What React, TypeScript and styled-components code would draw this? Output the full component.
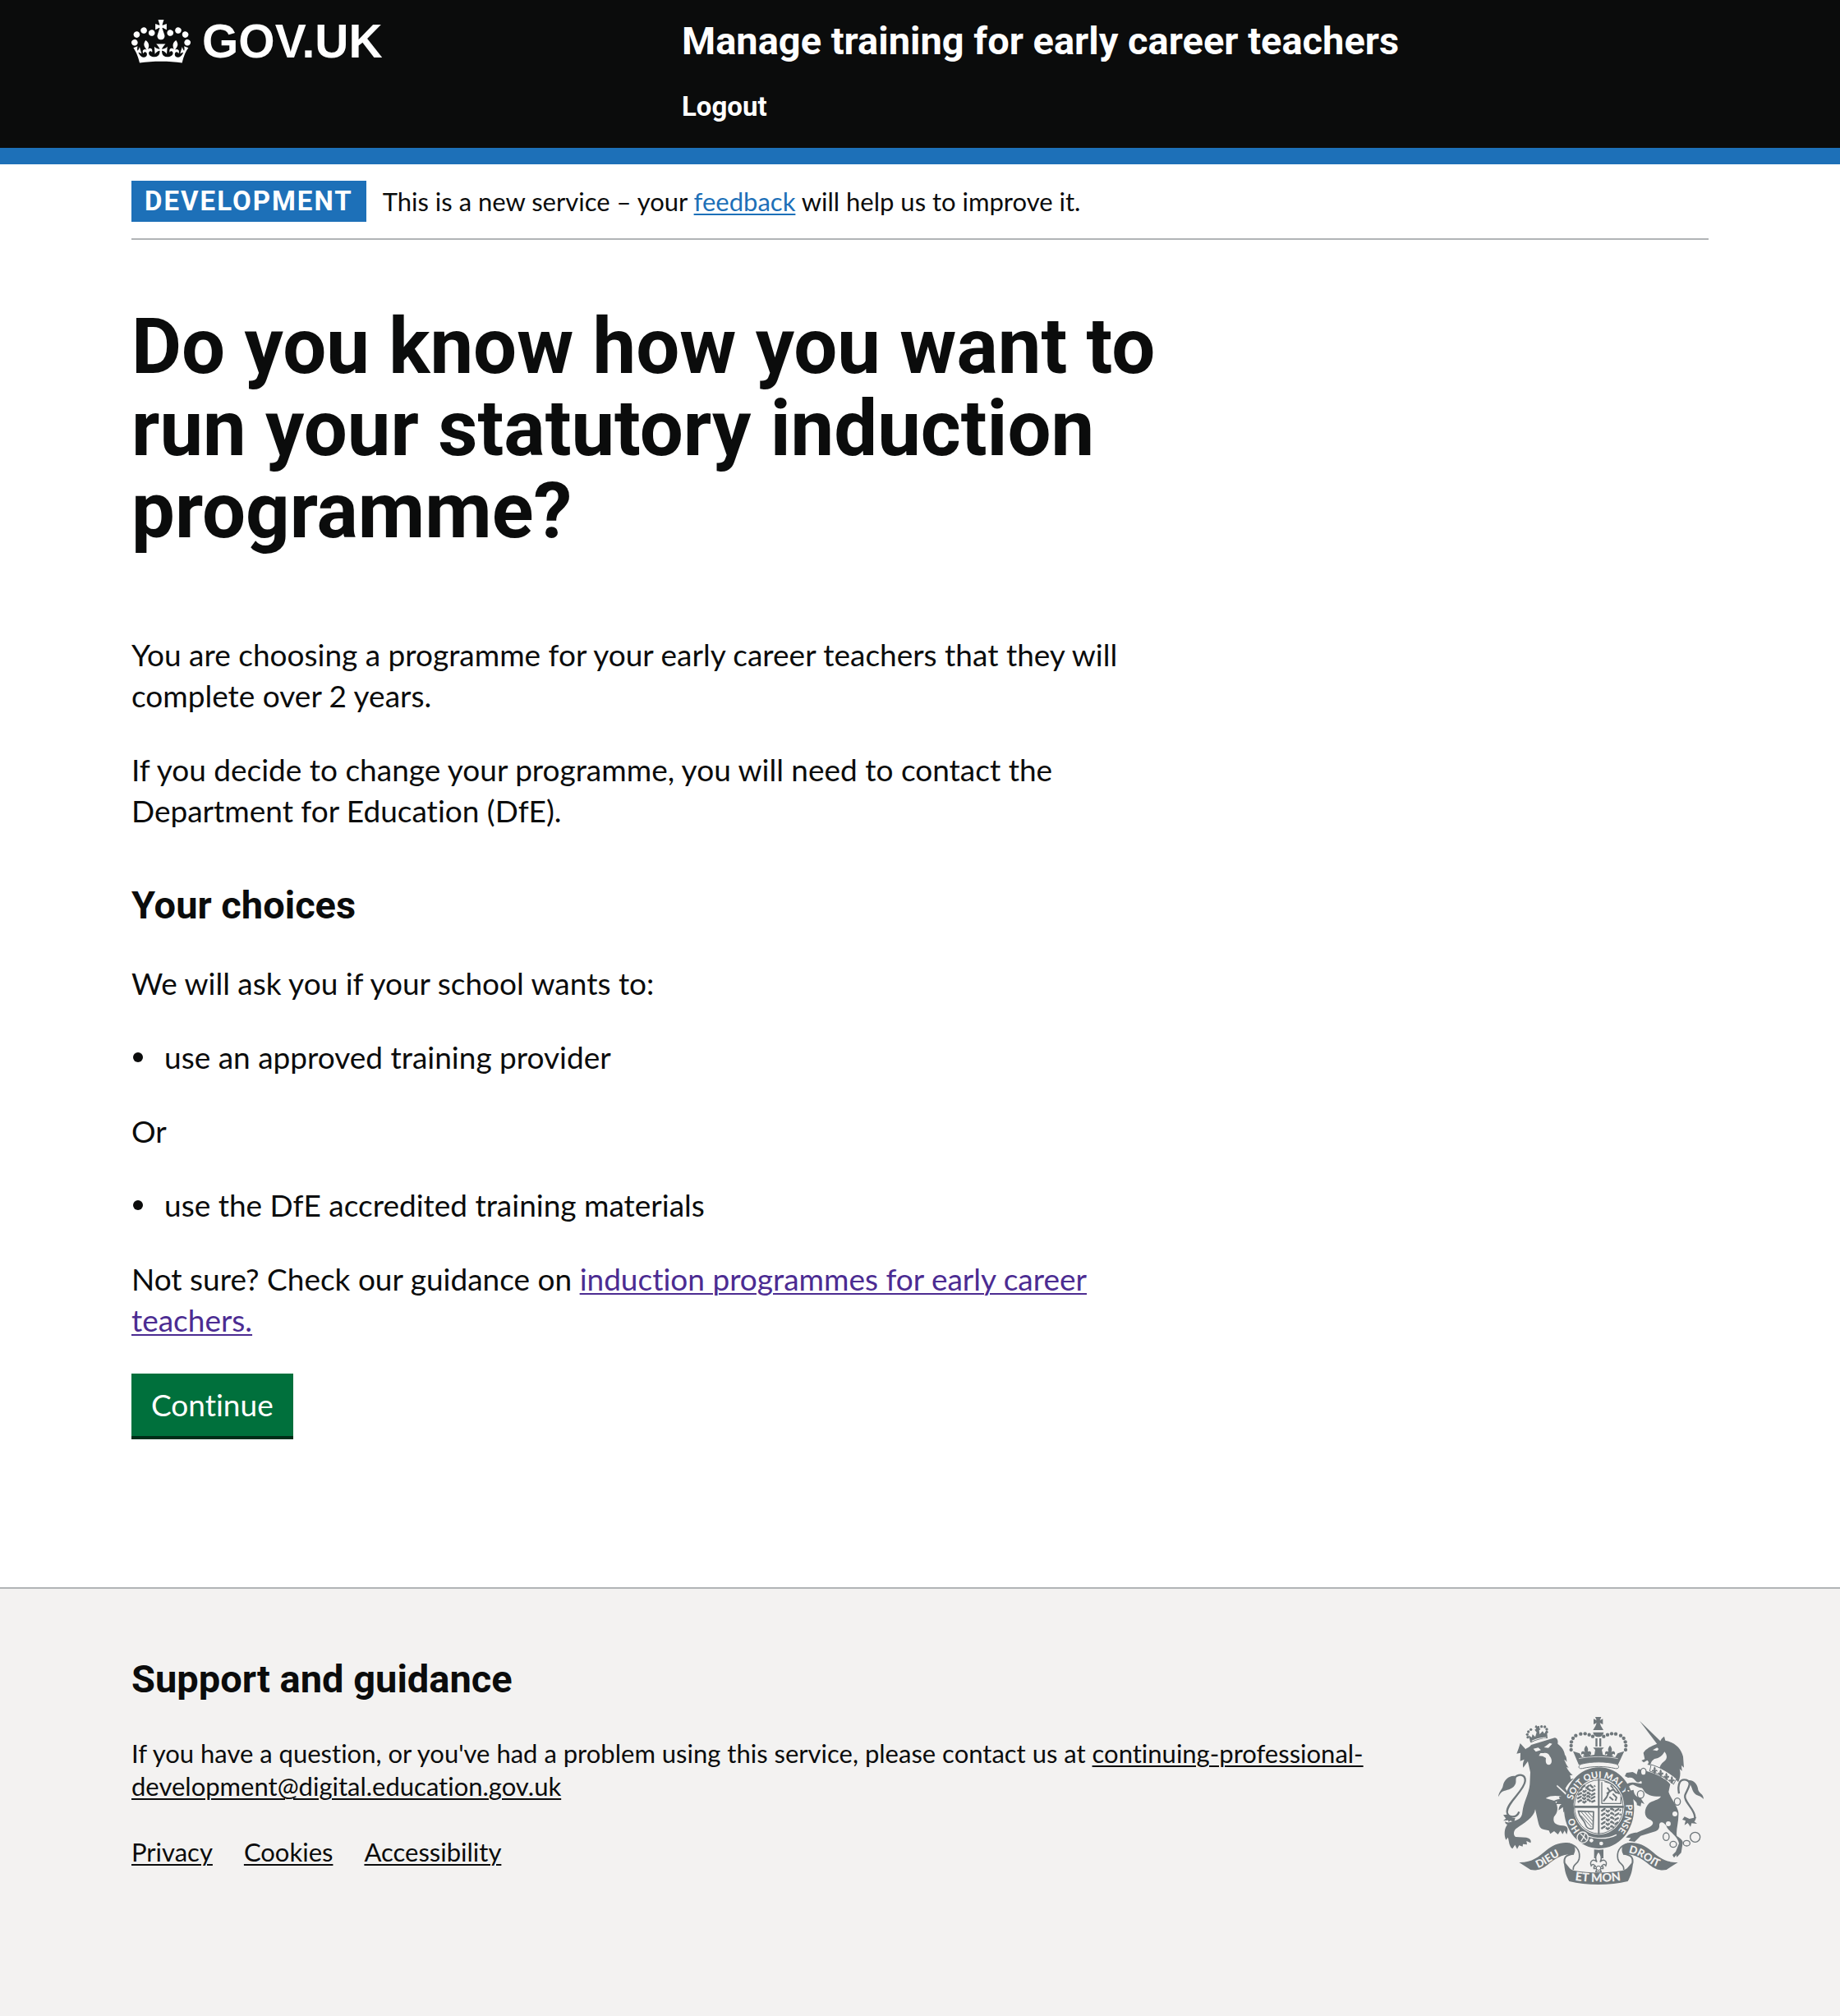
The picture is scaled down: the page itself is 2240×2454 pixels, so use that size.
import React from "react";
import styled, { createGlobalStyle } from "styled-components";

const ink = "#0b0c0c";
const blue = "#1d70b8";
const grey = "#b1b4b6";
const paper = "#f3f2f1";
const slate = "#6f777b";
const sans = `Lato, "Liberation Sans", Arial, sans-serif`;
const display = `Roboto, "Liberation Sans", Arial, sans-serif`;

const GlobalStyle = createGlobalStyle`
  *, *::before, *::after { box-sizing: border-box; }
  html { background: ${paper}; }
  body {
    margin: 0;
    color: ${ink};
    font-family: ${sans};
    font-variant-ligatures: none;
  }
  h1, h2, p, ul { margin: 0; padding: 0; }
`;

const Page = styled.div`
  display: flex;
  flex-direction: column;
  min-height: 100vh;
  background: #ffffff;
`;

const Container = styled.div`
  width: 100%;
  max-width: 2240px;
  margin: 0 auto;
  padding: 0 160px;
`;

const Header = styled.header`
  background: ${ink};
  border-bottom: 20px solid ${blue};
`;

const HeaderGrid = styled.div`
  display: grid;
  grid-template-columns: 1fr 2fr;
  padding: 20px 0 30px;
`;

const LogoLink = styled.a`
  display: flex;
  align-items: center;
  align-self: start;
  gap: 14px;
  height: 60px;
  color: #ffffff;
  font: bold 57px/60px "Liberation Sans", Arial, sans-serif;
  text-decoration: none;
`;

const HeaderContent = styled.div`
  display: flex;
  flex-direction: column;
  gap: 30px;
  padding-left: 30px;
`;

const HeaderLink = styled.a<{ $large?: boolean }>`
  align-self: flex-start;
  color: #ffffff;
  font-family: ${display};
  font-size: ${(p) => (p.$large ? 47 : 33)}px;
  line-height: ${(p) => (p.$large ? 60 : 40)}px;
  font-weight: bold;
  text-decoration: none;
`;

const Banner = styled.div`
  display: flex;
  align-items: center;
  gap: 20px;
  padding: 20px 0;
  border-bottom: 2px solid ${grey};
  font-size: 31px;
  line-height: 40px;
`;

const Tag = styled.strong`
  padding: 5px 16px;
  background: ${blue};
  color: #ffffff;
  font-family: ${display};
  font-size: 33px;
  letter-spacing: 2px;
  text-transform: uppercase;
`;

const Link = styled.a<{ $color?: string }>`
  color: ${(p) => p.$color ?? ink};
  text-decoration: underline;
  text-decoration-thickness: 2px;
  text-underline-offset: 3px;
`;

const Main = styled.main`
  display: flex;
  flex-direction: column;
  align-items: flex-start;
  gap: 40px;
  width: 66%;
  padding: 80px 0 180px;
  font-size: 37px;
  line-height: 50px;
`;

const Title = styled.h1`
  margin-bottom: 60px;
  font-family: ${display};
  font-size: 94px;
  line-height: 100px;
  font-weight: bold;
`;

const Heading = styled.h2`
  font-family: ${display};
  font-size: 47px;
  line-height: 60px;
  font-weight: bold;
`;

const SectionHeading = styled(Heading)`
  padding-top: 20px;
`;

const Bullets = styled.ul`
  list-style: none;
  li {
    display: flex;
    align-items: center;
    gap: 26px;
  }
  li::before {
    content: "";
    width: 12px;
    height: 12px;
    margin-left: 2px;
    border-radius: 50%;
    background: currentColor;
  }
`;

const Button = styled.button`
  height: 76px;
  margin-bottom: 4px;
  padding: 0 24px;
  border: 0;
  background: #00703c;
  box-shadow: 0 4px 0 #002d18;
  color: #ffffff;
  font: 37px/50px ${sans};
  font-variant-ligatures: none;
  cursor: pointer;
`;

const Footer = styled.footer`
  flex: 1;
  padding: 80px 0;
  border-top: 2px solid ${grey};
  background: ${paper};
`;

const FooterRow = styled.div`
  display: flex;
  align-items: flex-end;
  justify-content: space-between;
  gap: 140px;
`;

const FooterText = styled.div`
  display: flex;
  flex-direction: column;
  gap: 40px;
  flex: 1;
  padding-bottom: 20px;
  font-size: 31px;
  line-height: 40px;
`;

const FooterLinks = styled.nav`
  display: flex;
  gap: 38px;
`;

const CrestBox = styled.div`
  padding-right: 6px;
  svg { display: block; }
`;

function Crown() {
  return (
    <svg width="72" height="53" viewBox="0 0 132 97" fill="currentColor" aria-hidden="true">
      <path
        fillRule="evenodd"
        d="M25 30.2c3.5 1.5 7.7-.2 9.1-3.7 1.5-3.6-.2-7.8-3.9-9.2-3.6-1.4-7.6.3-9.1 3.9-1.4 3.5.3 7.5 3.9 9zM9 39.5c3.6 1.5 7.8-.2 9.2-3.7 1.5-3.6-.2-7.8-3.9-9.1-3.6-1.5-7.6.2-9.1 3.8-1.4 3.5.3 7.5 3.8 9zM4.4 57.2c3.5 1.5 7.7-.2 9.1-3.8 1.5-3.6-.2-7.7-3.9-9.1-3.5-1.5-7.6.3-9.1 3.8-1.4 3.5.3 7.6 3.9 9.1zm38.3-21.4c3.5 1.5 7.7-.2 9.1-3.8 1.5-3.6-.2-7.7-3.9-9.1-3.6-1.5-7.6.3-9.1 3.8-1.3 3.6.4 7.7 3.9 9.1zm64.4-5.6c-3.6 1.5-7.8-.2-9.1-3.7-1.5-3.6.2-7.8 3.8-9.2 3.6-1.4 7.7.3 9.2 3.9 1.3 3.5-.4 7.5-3.9 9zm15.9 9.3c-3.6 1.5-7.7-.2-9.1-3.7-1.5-3.6.2-7.8 3.7-9.1 3.6-1.5 7.7.2 9.2 3.8 1.5 3.5-.3 7.5-3.8 9zm4.7 17.7c-3.6 1.5-7.8-.2-9.2-3.8-1.5-3.6.2-7.7 3.9-9.1 3.6-1.5 7.7.3 9.2 3.8 1.3 3.5-.4 7.6-3.9 9.1zM89.3 35.8c-3.6 1.5-7.8-.2-9.2-3.8-1.4-3.6.2-7.7 3.9-9.1 3.6-1.5 7.7.3 9.2 3.8 1.4 3.6-.3 7.7-3.9 9.1zM69.7 17.7l8.9 4.7V9.3l-8.9 2.8c-.2-.3-.5-.6-.9-.9L72.4 0H59.6l3.5 11.2c-.3.3-.6.5-.9.9l-8.8-2.8v13.1l8.8-4.7c.3.3.6.7.9.9l-5 15.4v.1c-.2.8-.4 1.6-.4 2.4 0 4.1 3.1 7.5 7 8.1h.2c.3 0 .7.1 1 .1.4 0 .7 0 1-.1h.2c4-.6 7.1-4.1 7.1-8.1 0-.8-.1-1.7-.4-2.4V34l-5.1-15.4c.4-.2.7-.6 1-.9zM66 92.8c16.9 0 32.8 1.1 47.1 3.2 4-16.9 8.9-26.7 14-33.5l-9.6-3.4c1 4.9 1.1 7.2 0 10.2-1.5-1.4-3-4.3-4.2-8.7L108.6 76c2.8-2 5-3.2 7.5-3.3-4.4 9.4-10 11.9-13.6 11.2-4.3-.8-6.3-4.6-5.6-7.9 1-4.7 5.7-5.9 8-.5 4.3-8.7-3-11.4-7.6-8.8 7.1-7.2 7.9-13.5 2.1-21.1-8 6.1-8.1 12.3-4.5 20.8-4.7-5.4-12.1-2.5-9.5 6.2 3.4-5.2 7.9-2 7.2 3.1-.6 4.3-6.4 7.8-13.5 7.2-10.3-.9-10.9-8-11.2-13.8 2.5-.5 7.1 1.8 11 7.3L80.2 60c-4.1 4.4-8 5.3-12.3 5.4 1.4-4.4 8-11.6 8-11.6H55.5s6.4 7.2 7.9 11.6c-4.2-.1-8-1-12.3-5.4l1.4 16.4c3.9-5.5 8.5-7.7 10.9-7.3-.3 5.8-.9 12.8-11.1 13.8-7.2.6-12.9-2.9-13.5-7.2-.7-5 3.8-8.3 7.1-3.1 2.7-8.7-4.6-11.6-9.4-6.2 3.7-8.5 3.6-14.7-4.6-20.8-5.8 7.6-5 13.9 2.2 21.1-4.7-2.6-11.9.1-7.7 8.8 2.3-5.5 7.1-4.2 8.1.5.7 3.3-1.3 7.1-5.7 7.9-3.5.7-9-1.8-13.5-11.2 2.5.1 4.7 1.3 7.5 3.3l-4.7-15.4c-1.2 4.4-2.7 7.2-4.3 8.7-1.1-3-.9-5.3 0-10.2l-9.5 3.4c5 6.9 9.9 16.7 14 33.5 14.8-2.1 30.8-3.2 47.7-3.2z"
      />
    </svg>
  );
}

const beads: [number, number][] = [
  [308, 180], [308, 165], [309, 151], [315, 138], [325, 128], [343, 122], [359, 121], [374, 125], [387, 131],
  [507, 180], [508, 165], [506, 151], [500, 138], [489, 128], [471, 122], [456, 121], [441, 125], [427, 131],
];
const lionBeads: [number, number][] = [
  [150, 134], [148, 124], [152, 114], [161, 106], [188, 99], [200, 95], [212, 96], [219, 105], [219, 115],
];
const links: [number, number, number, number][] = [
  [572, 260, 10, 13], [562, 343, 12, 14], [696, 369, 11, 13], [655, 497, 11, 14], [681, 525, 12, 11], [730, 521, 12, 10], [761, 499, 18, 18],
];

function Fleur({ x, y, s = 1 }: { x: number; y: number; s?: number }) {
  return (
    <path
      transform={`translate(${x} ${y}) scale(${s})`}
      d="M0-24C-10-12-9-4-4 4c-10-10-20-2-15 10 4-6 8-4 12 2h-5v5h8l-3 9h14l-3-9h8v-5H7c4-6 8-8 12-2 5-12-5-20-15-10 5-8 6-16-4-28z"
    />
  );
}

function RibbonEnd() {
  return (
    <>
      <path d="M118 591c47 1 72-21 97-42 26-22 55-33 85-29 22 4 28 25 18 41-42-2-72 18-96 39-22 18-42 22-62 18z" />
      <path d="M300 523c34 6 42 34 37 57-6 20-24 16-21 38" fill="none" stroke={slate} strokeWidth="5" />
      <path d="M318 560c-24 2-38 10-34 34l18 22" fill="none" stroke={slate} strokeWidth="6" />
    </>
  );
}

function Crest() {
  return (
    <svg width="250" height="204" viewBox="42 60 750 612" fill={slate} role="img" aria-label="Royal coat of arms">
      <defs>
        <path id="motto-top" d="M314 364A100 110 0 0 1 508 368" />
        <path id="motto-right" d="M507 380C512 420 498 462 462 494" />
        <path id="motto-left" d="M341 474C328 458 318 440 315 405" />
        <path id="ribbon-left" d="M186 612C222 600 244 570 300 556" />
        <path id="ribbon-right" d="M517 556C556 562 580 584 600 597C615 606 630 611 656 612" />
        <path id="ribbon-mid" d="M322 656Q408 669 502 655" />
      </defs>

      {/* lion: tail, body, face, crown */}
      <path d="M42 352c2-20 15-27 17-40 5-26 26-42 52-35-8 8-2 18-6 27-7 18-26 22-42 26-10 3-16 12-21 22z" />
      <path d="M98 284c20-19 44-15 42 10-3 35-66 78-66 112 0 24 36 24 44 0" fill="none" stroke={slate} strokeWidth="7" />
      <path d="M60 418l16-2c7 8 20 14 28 13l-4 14-14-4-6 5-2-7-18 2 10-8z" />
      <path d="M142 178c4-6 14-6 20-16l86-26c10 2 13 10 11 22 12 9 24 22 26 40 6 7 7 16 7 26-3-5-7-8-9-9 5 14 8 20 16 30l-8-2c5 11 13 22 23 29l-10 1 3 14 11-3c-12 10-24 22-31 37l24 42 8 32c-4 10-7 14-11 16l-5-12-8 12-5-16-10 14-2-20-16 12c1-12 4-18 11-23l-20-1 4-9-18 4c8-9 18-12 27-12l-2-9 9-2c-20-1-40-4-58 8l34 10c14 22 11 43-4 58-4 20 3 29 33 32 16 0 22 10 14 32l-8-14-7 13-8-13-9 14-14-12-14 10-5-12-18-4c-14-2-18-12-22-30l-10-44c-4 30-42 52-66 68-16 10-14 27-6 33l39 2c14 3 20 11 16 20l-15-7 2 13-15-2-1 9-13-4-7 13-8-15-9 14c-14-9-12-29-17-41l-7 9c-8-18-6-42 5-56-7-3-9-7-8-12 8 7 16 4 25 1 24-6 36-12 38-34 4-38 24-66 27-102l2-44-9-40-17 23c-3-14 1-23 4-30l-15 6 1-30-14 3c6-14 9-25 13-38z" />
      <g fill={paper}>
        <path d="M170 176l18-4 10 9-19 6zM209 171l21-16 9 3-14 15z" />
        <path d="M196 192l-6 10 14 1 12 7c-2 14 0 24 10 25 14-2 14-20 4-32-3-9-12-13-22-11z" />
        <path d="M257 308l52 47-5 4-49-46z" />
      </g>
      <g>
        {lionBeads.map(([x, y]) => <circle key={`${x}-${y}`} cx={x} cy={y} r="5" />)}
        <path d="M159 152l-6-25 11 8 3-12 10 10 5-17-7-9 6-5-6-5 5-8 5 6 7-3-1 9 6 3-6 5 2 14 11-11 6 9 9-12 3 29c-21 0-42 6-60 16z" />
        <path d="M164 148c16-8 34-12 53-13" stroke={paper} strokeWidth="3" fill="none" />
      </g>

      {/* imperial crown */}
      <path d="M396 60h22l-5 12 11-5v20l-11-5 4 11 9 15h-38l9-15 4-11-11 5V67l11 5z" />
      <path d="M388 116h39c-2 10-8 17-19 17s-18-7-20-17zM397 138h7v30h-7zM411 138h7v30h-7z" />
      {beads.map(([x, y]) => <circle key={`${x}-${y}`} cx={x} cy={y} r="6.5" />)}
      <path d="M315 185l24 8 9 14 18-3-4-20 10 2 7 14 14-2 3-18-8-8h40l-8 8 4 18 14 2 7-14 10-2-4 20 18 3 9-14 24-8-23 50c-42-12-100-12-143 0z" />
      <Fleur x={363} y={186} s={0.9} />
      <Fleur x={450} y={186} s={0.9} />
      <path d="M336 212c45-9 98-9 143 0" stroke={paper} strokeWidth="2" fill="none" />

      {/* garter with motto */}
      <path
        fillRule="evenodd"
        d="M410 244c72 0 128 64 128 148s-56 148-128 148-128-64-128-148 56-148 128-148zM409 284c-50 0-92 46-92 104s42 102 92 102 93-44 93-102-43-104-93-104z"
      />
      <path d="M345 232c-14 8-10 19 4 16 38-9 82-9 120 0 14 3 18-8 4-16-40-10-88-10-128 0z" fill={paper} stroke={slate} strokeWidth="3" />
      <g fill={paper} fontFamily={sans} fontWeight="900" fontSize="33">
        <text><textPath href="#motto-top">SOIT QUI MAL Y</textPath></text>
        <text><textPath href="#motto-right">PENSE</textPath></text>
        <text><textPath href="#motto-left">HO</textPath></text>
      </g>
      <ellipse cx="409" cy="388" rx="89" ry="98" fill={paper} stroke={slate} strokeWidth="3" />
      <path d="M406 286h6v202h-6zM320 384h180v8H320z" />
      <g fill="none" stroke={slate} strokeWidth="7" strokeLinejoin="round" strokeDasharray="18 3">
        <path d="M346 320l10-9 8 8 12-12 10 10 10-6M334 332l12-8 10 10 14-12 12 10 14-8M332 345l12-7 12 10 14-12 12 10 14-8M330 358l14-7 12 9 14-12 12 10 14-8M332 371l12-7 12 9 14-12 12 10 14-6" />
        <path d="M418 404l12-8 12 10 14-12 12 10 14-8 8 6M418 420l12-8 12 10 14-12 12 10 14-8 8 6M418 436l12-8 12 10 14-12 12 10 14-8M418 452l12-8 12 10 14-12 12 10 12-8M418 468l12-8 12 10 14-12 10 8" />
      </g>
      <g fill="none" stroke={slate} strokeWidth="6" strokeLinejoin="round">
        <path d="M426 368l12-16 8-18 16-10 10 12 12 2M440 318l10 14-12 8M460 340l14 14-4 12M448 352l14 12M452 310l10 10" />
        <path d="M420 298v78h70v-26M430 296c26 4 44 22 54 46" strokeWidth="4" />
        <path d="M334 404l56 2-2 62c-14 4-24-4-28-16-4-18-22-22-26-48z" strokeWidth="5" />
        <path d="M346 408l40 46M358 408l30 34M370 408l18 20M344 420l38 42" strokeWidth="3" />
      </g>
      <path d="M362 492c34 14 78 16 112-2" stroke={paper} strokeWidth="4" fill="none" />
      <circle cx="350" cy="500" r="20" fill={slate} stroke={paper} strokeWidth="4" />
      <path d="M342 486l12 12-10 16M360 482l-6 16 10 12" stroke={paper} strokeWidth="4" fill="none" />
      <circle cx="382" cy="511" r="7" fill={paper} />
      <circle cx="418" cy="522" r="7" fill={paper} />

      {/* unicorn: horn, head, body, coronet, tail */}
      <path d="M558 74l82 80-14 10z" />
      <path d="M572 191c10-16 28-24 48-32l12-7c3-9 8-16 16-21l4 15c34 7 57 26 65 59l3 40-9-8 2 20-9-7c5 14 2 34-5 48-8-14-36-28-64-36-10-9-3-28 12-39 14-10 12-24 2-36-6 12-19 25-36 26-11 7-14 13-15 23l-12-2c8-7 5-12 0-16l-13 8-8-7 12-5z" />
      <path d="M606 181l16-9 6 5-6 7z" fill={paper} />
      <path d="M592 260c30 9 66 28 78 46l-6 28c8 24 33 54 36 74 2 36-10 62-6 86 10 8 20 12 22 24l-6 38-16 16-2-8-8 10-6-10 12-12 12-30c-6-30-42-46-46-64-8-14-24-20-26-4 2 14-6 22-22 26l-46 14-22 22-22-4 8-10-18-2c10-14 28-18 40-18l46-20c18-10 16-22 0-28-22-10-20-38-2-58 12-12 38-12 44-26-20 2-54-2-64-24-10-12-6-20-6-30l-12-6c-10-8-8-22 0-40z" />
      <path d="M568 284c-8 16-16 18-24 10-6-8-14-16-28-12l-12-6 6-12 22-3c12 3 22 16 26 14 8-6 8-12 12-12zM570 320c-12 0-24-8-34-12-14-2-20 10-22 22l16 18-14-2-10-14 2-22c14-18 38-8 60-6zM520 330l16-4c2 20 12 26 26 30l14 22-12-5-2 13-14-4c4-12-12-18-20-28z" />
      <path d="M600 234c32 9 66 28 93 52l-11 20c-28-24-58-40-87-48z" fill={paper} stroke={slate} strokeWidth="3" />
      <Fleur x={613} y={253} s={0.5} />
      <Fleur x={635} y={263} s={0.5} />
      <Fleur x={656} y={275} s={0.5} />
      <Fleur x={676} y={288} s={0.5} />
      <path d="M702 340c-6-32 2-56 26-50 26 8 4 34-4 56-6 24 36 50 36 80 0 20-20 20-34 6" fill="none" stroke={slate} strokeWidth="7" />
      <path d="M730 292c26-6 40 14 42 34 4 14 20 14 20 34-10-12-22-12-30-18-16-12-8-30-32-50z" />
      <path d="M722 424l18 8 26-6-10 14 12 10-20-2-4 13-10-14-12 8 4-16-12-4z" />
      <g fill={paper}>
        <circle cx="687" cy="414" r="9" />
        <circle cx="663" cy="450" r="9" />
      </g>
      {links.map(([x, y, rx, ry]) => (
        <ellipse key={`${x}-${y}`} cx={x} cy={y} rx={rx} ry={ry} fill={paper} stroke={slate} strokeWidth="4" />
      ))}

      {/* ribbon */}
      <RibbonEnd />
      <g transform="translate(816 0) scale(-1 1)"><RibbonEnd /></g>
      <path d="M281 588c10 16 20 28 38 33 58 10 118 10 176 0 18-5 28-17 40-33-4 28-4 44-20 72-64 16-152 16-214 0-16-28-16-44-20-72z" />
      <g fill={paper} fontFamily={sans} fontWeight="900">
        <text fontSize="39"><textPath href="#ribbon-left">DIEU</textPath></text>
        <text fontSize="39"><textPath href="#ribbon-right">DROIT</textPath></text>
        <text fontSize="43"><textPath href="#ribbon-mid">ET MON</textPath></text>
      </g>
      <path d="M392 544c12 2 22 2 34 0v32h-34z" />
      <g fill={paper} stroke={slate} strokeWidth="3">
        <Fleur x={408} y={584} s={1.4} />
        <circle cx="408" cy="612" r="8" />
      </g>
    </svg>
  );
}

export default function App() {
  return (
    <Page>
      <GlobalStyle />
      <Header>
        <Container>
          <HeaderGrid>
            <LogoLink href="#">
              <Crown />
              <span>GOV.UK</span>
            </LogoLink>
            <HeaderContent>
              <HeaderLink href="#" $large>Manage training for early career teachers</HeaderLink>
              <HeaderLink href="#">Logout</HeaderLink>
            </HeaderContent>
          </HeaderGrid>
        </Container>
      </Header>

      <Container>
        <Banner>
          <Tag>Development</Tag>
          <span>
            This is a new service – your <Link href="#" $color={blue}>feedback</Link> will help us to improve it.
          </span>
        </Banner>
        <Main>
          <Title>Do you know how you want to run your statutory induction programme?</Title>
          <p>You are choosing a programme for your early career teachers that they will complete over 2 years.</p>
          <p>If you decide to change your programme, you will need to contact the Department for Education (DfE).</p>
          <SectionHeading>Your choices</SectionHeading>
          <p>We will ask you if your school wants to:</p>
          <Bullets><li>use an approved training provider</li></Bullets>
          <p>Or</p>
          <Bullets><li>use the DfE accredited training materials</li></Bullets>
          <p>
            Not sure? Check our guidance on{" "}
            <Link href="#" $color="#4c2c92">induction programmes for early career teachers.</Link>
          </p>
          <Button type="button">Continue</Button>
        </Main>
      </Container>

      <Footer>
        <Container>
          <FooterRow>
            <FooterText>
              <Heading>Support and guidance</Heading>
              <p>
                If you have a question, or you've had a problem using this service, please contact us at{" "}
                <Link href="#">continuing-professional-development@digital.education.gov.uk</Link>
              </p>
              <FooterLinks>
                <Link href="#">Privacy</Link>
                <Link href="#">Cookies</Link>
                <Link href="#">Accessibility</Link>
              </FooterLinks>
            </FooterText>
            <CrestBox><Crest /></CrestBox>
          </FooterRow>
        </Container>
      </Footer>
    </Page>
  );
}
